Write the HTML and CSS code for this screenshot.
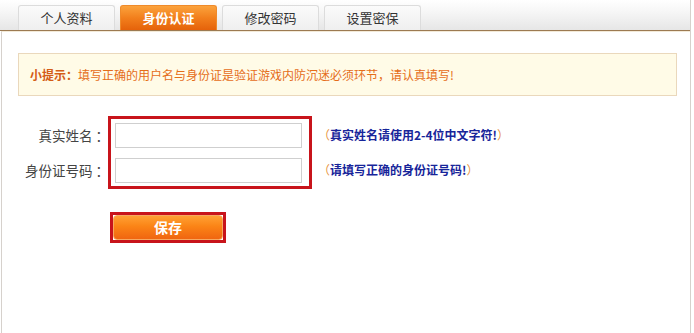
FILE: index.html
```html
<!DOCTYPE html>
<html lang="zh-CN">
<head>
<meta charset="utf-8">
<title>身份认证</title>
<link rel="stylesheet" href="styles.css">
</head>
<body>
<div class="page">
  <div class="tabbar">
    <a class="tab">个人资料</a>
    <a class="tab active">身份认证</a>
    <a class="tab">修改密码</a>
    <a class="tab">设置密保</a>
  </div>
  <div class="content">
    <div class="tip"><b>小提示：</b>填写正确的用户名与身份证是验证游戏内防沉迷必须环节，请认真填写!</div>
    <div class="form">
      <div class="labels">
        <label class="row">真实姓名<span class="colon">：</span></label>
        <label class="row">身份证号码<span class="colon">：</span></label>
      </div>
      <div class="mark inputs">
        <input class="field" type="text">
        <input class="field" type="text">
      </div>
      <div class="hints">
        <div class="row"><span class="paren">（</span>真实姓名请使用2-4位中文字符!<span class="paren">）</span></div>
        <div class="row"><span class="paren">（</span>请填写正确的身份证号码!<span class="paren">）</span></div>
      </div>
    </div>
    <div class="actions">
      <div class="mark btnmark"><button class="save" type="button">保存</button></div>
    </div>
  </div>
</div>
</body>
</html>
```
FILE: styles.css
```css
html, body {
  margin: 0;
  padding: 0;
  background: #fff;
}
body {
  font-family: "Noto Sans CJK SC", "Microsoft YaHei", sans-serif;
  color: #333;
}
.page {
  width: 690px;
  height: 333px;
  border-right: 1px solid #d6d1cc;
  display: flex;
  flex-direction: column;
}
.tabbar {
  height: 30px;
  border-bottom: 1px solid #9c7a52;
  background: linear-gradient(to bottom, #ffffff 0%, #f6f6f6 40%, #e6e6e6 100%);
  display: flex;
  align-items: flex-end;
  gap: 5px;
  padding-left: 18px;
}
.tab {
  width: 95px;
  height: 24px;
  border: 1px solid #dcdcdc;
  border-bottom: none;
  border-radius: 3px 3px 0 0;
  background: linear-gradient(to bottom, #fbfbfb 0%, #efefef 100%);
  font-size: 13px;
  line-height: 24px;
  text-align: center;
  color: #333;
}
.tab.active {
  border-color: #ef8a2a;
  background: linear-gradient(to bottom, #fba23c 0%, #f27f1c 50%, #e5620a 100%);
  color: #fff;
  font-weight: bold;
}
.content {
  flex: 1;
  margin-left: 1px;
  border-left: 1px solid #d6d1cc;
  border-top: 1px solid #f3ead8;
  padding: 21px 13px 0 16px;
}
.colon {
  padding-left: 3px;
  margin-right: -3px;
}
.tip {
  height: 41px;
  border: 1px solid #ead8bc;
  background: #fffbe7;
  padding-left: 11px;
  font-size: 12px;
  line-height: 41px;
  color: #e56d19;
}
.tip b {
  color: #d45c16;
}
.form {
  display: flex;
  margin-top: 20px;
}
.labels {
  width: 88px;
  padding-top: 7px;
  display: flex;
  flex-direction: column;
  gap: 10px;
  text-align: right;
}
.row {
  height: 25px;
  line-height: 25px;
  display: block;
}
.labels .row {
  font-size: 13.5px;
  color: #444;
}
.mark {
  border: 3px solid #c8141b;
}
.inputs {
  margin-left: 2px;
  padding: 4px 7px 3px 4px;
  display: flex;
  flex-direction: column;
  gap: 10px;
}
.field {
  width: 185px;
  height: 23px;
  margin: 0;
  padding: 0;
  border: 1px solid #cfcfcf;
  background: #fff;
  box-sizing: content-box;
}
.hints {
  margin-left: 6px;
  padding-top: 6px;
  display: flex;
  flex-direction: column;
  gap: 10px;
}
.hints .row {
  font-size: 12px;
  font-weight: bold;
  color: #17259a;
}
.paren {
  color: #e7963f;
  font-weight: normal;
}
.actions {
  display: flex;
  padding-left: 92px;
  margin-top: 23px;
}
.btnmark {
  padding: 0;
  width: 110px;
  height: 25px;
}
.save {
  display: block;
  width: 110px;
  height: 25px;
  margin: 0;
  padding: 0;
  border: 1px solid #f6a860;
  border-radius: 4px;
  background: linear-gradient(to bottom, #ffa033 0%, #fb8416 45%, #f06510 100%);
  color: #fff;
  font-family: "Noto Sans CJK SC", sans-serif;
  font-size: 14px;
  font-weight: bold;
  line-height: 23px;
}
```
